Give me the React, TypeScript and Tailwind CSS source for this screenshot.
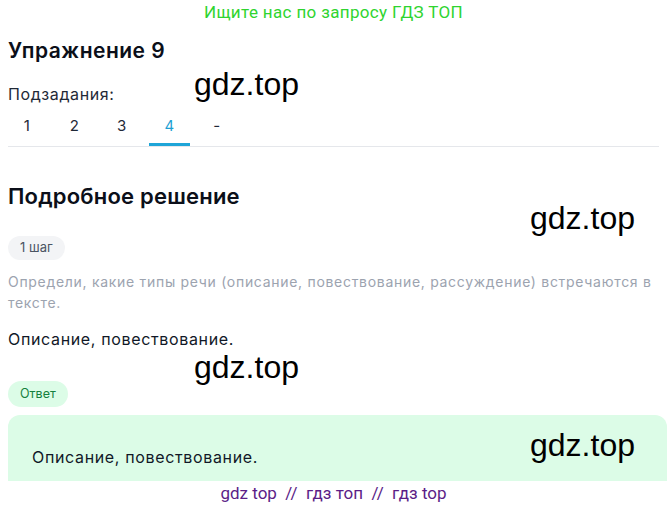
const tabs = ['1', '2', '3', '4', '-'];

function Watermark({ className }: { className: string }) {
  return (
    <span className={`pointer-events-none absolute font-['Liberation_Sans',Arial,sans-serif] text-[32px] leading-none text-black ${className}`}>
      gdz.top
    </span>
  );
}

export default function App() {
  return (
    <div className="relative w-[667px] h-[508px] overflow-hidden bg-white font-['Inter','Roboto',sans-serif] text-[#111827]">
      <div className="text-center font-['Roboto',sans-serif] text-[17px] leading-[22px] tracking-[0.35px] text-[#2fd42f] pt-[1px]">
        Ищите нас по запросу ГДЗ ТОП
      </div>

      <div className="px-2">
        <h1 className="mt-[14px] text-[21px] leading-[28px] tracking-[0.5px] font-semibold text-[#0b0f19]">Упражнение 9</h1>
        <div className="mt-[19px] text-[16px] leading-[20px] tracking-[0.6px] text-[#1f2937]">Подзадания:</div>

        <div className="mt-[2px] flex border-b border-[#e5e7eb]">
          <div className="-ml-[5px] flex">
            {tabs.map((t) => (
              <div key={t} className="w-[47.5px] h-[40px] flex justify-center">
                <div
                  className={`w-[41px] flex items-center justify-center border-b-[3px] pt-[3px] text-[15px] ${
                    t === '4' ? 'border-[#1ea5d8] text-[#1e9fd3]' : 'border-transparent text-[#1f2937]'
                  }`}
                >
                  {t}
                </div>
              </div>
            ))}
          </div>
        </div>

        <h2 className="mt-[35px] text-[22px] leading-[28px] tracking-[0.2px] font-semibold text-[#0b0f19]">Подробное решение</h2>

        <div className="mt-[26px] inline-flex h-[24px] items-center rounded-full bg-[#f3f4f6] px-[12px] text-[13px] text-[#4b5563]">
          1 шаг
        </div>

        <p className="mt-[11px] text-[14px] leading-[21px] tracking-[0.7px] text-[#9ca3af] pr-1">
          Определи, какие типы речи (описание, повествование, рассуждение) встречаются в тексте.
        </p>

        <p className="mt-[15px] text-[16px] leading-[22px] tracking-[0.65px] text-[#111827]">Описание, повествование.</p>

        <div className="mt-[31px] inline-flex h-[26px] items-center rounded-full bg-[#dcfce7] px-[12px] text-[12.5px] text-[#15803d]">
          Ответ
        </div>

        <div className="mt-[8px] -mr-2 h-[66px] rounded-t-[12px] bg-[#dcfce7] px-6 pt-[31px] text-[16px] leading-[22px] tracking-[0.65px] text-[#111827]">
          Описание, повествование.
        </div>
      </div>

      <div className="text-center font-['Roboto',sans-serif] text-[17px] leading-[24px] text-[#5b1d87]">
        gdz top&nbsp; //&nbsp; гдз топ&nbsp; //&nbsp; гдз top
      </div>

      <Watermark className="left-[194px] top-[68px]" />
      <Watermark className="left-[530px] top-[202px]" />
      <Watermark className="left-[194px] top-[351px]" />
      <Watermark className="left-[530px] top-[429px]" />
    </div>
  );
}
